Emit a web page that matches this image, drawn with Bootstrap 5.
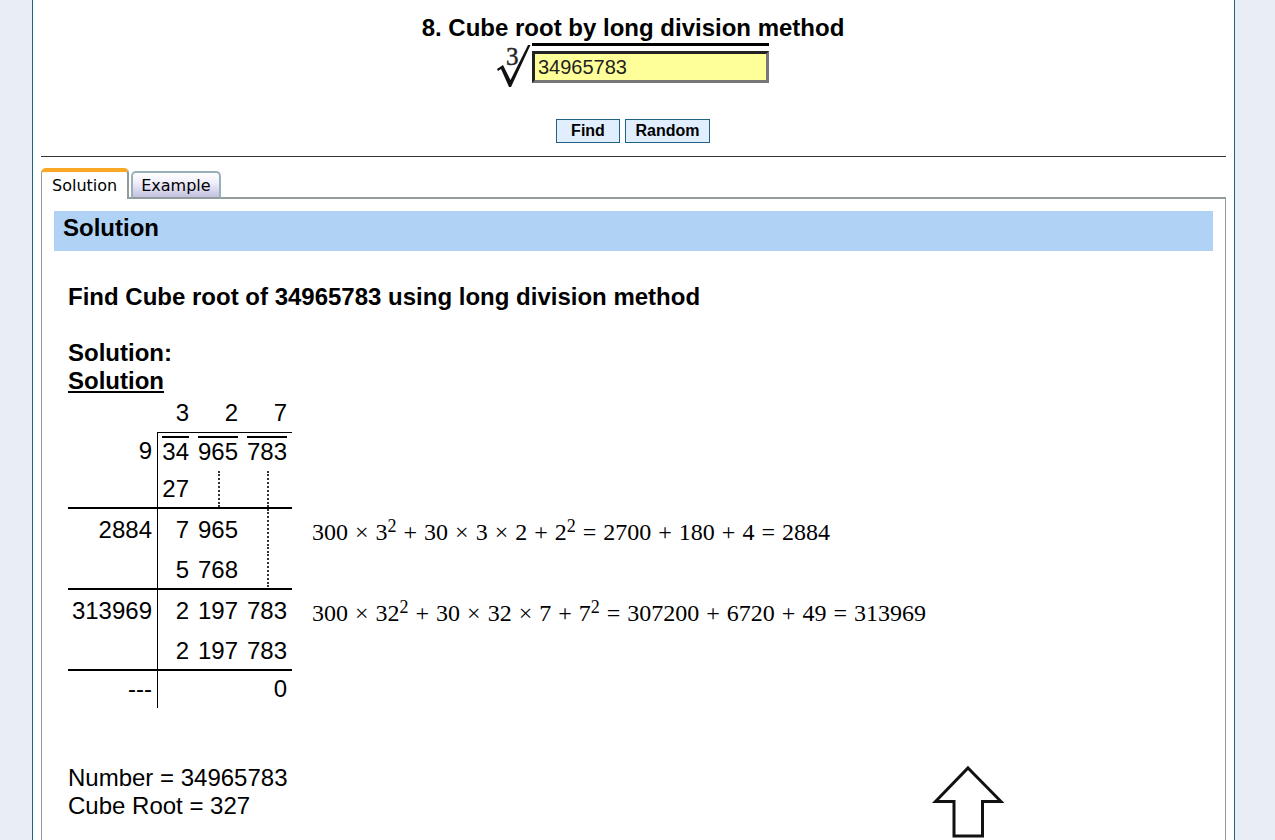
<!DOCTYPE html>
<html lang="en">
<head>
<meta charset="utf-8">
<meta name="viewport" content="width=device-width, initial-scale=1">
<title>Cube root by long division method</title>
<link href="https://cdn.jsdelivr.net/npm/bootstrap@5.3.0/dist/css/bootstrap.min.css" rel="stylesheet">
<style>
  body { background: #e8edf6; color: #000; font: 24px/28px "Liberation Sans", Arial, sans-serif; padding: 0 40px 0 32px; }
  .sheet { background: #fff; border: 1px solid #23647f; border-width: 0 1px; padding: 14px 8px 0; }
  .finder { padding-right: 1px; }
  .title { font-size: 24px; line-height: 28px; font-weight: 700; }
  .root-row { margin-top: 1px; }
  .button-row { gap: 5px; margin-top: 31px; }
  .radical { width: 35px; height: 45px; }
  .number-box { width: 237px; border-top: 3px solid #000; padding-top: 5px; }
  .number-box input { width: 100%; height: 32px; padding: 0 3px; border: 3px solid; border-color: #222 #767676 #767676 #222; background: #ff9; font-size: 20px; line-height: 24px; color: #222; border-radius: 0; }
  .tool-btn { height: 24px; padding: 0 9px; min-width: 64px; border: 1px solid #236181; border-radius: 0; background: #e0eefd; color: #000; font-weight: 700; font-size: 16px; line-height: 20px; }
  .tool-btn.wide { min-width: 85px; }
  .rule { height: 1px; background: #333; margin: 13px 0 11px; }
  .tab-row { border: 0; margin-bottom: -2px; gap: 2px; position: relative; }
  .tab-row .tab-btn { margin: 0; padding: 0 8px; font: 16px/26px "DejaVu Sans", Verdana, sans-serif; color: #000; border: 2px solid #9ab0b8; border-radius: 5px 5px 0 0; height: 28px; background: linear-gradient(#fff, #f0eefb 40%, #c3c2df); border-bottom: 2px solid #929c9c; }
  .tab-row .tab-btn.active { height: 31px; padding: 0 10px; color: #000; background: #fff; border: 1px solid #929c9c; border-right-width: 2px; border-top: 4px solid #f9a825; border-bottom: 0; }
  .panel { border: 1px solid #969696; border-top: 2px solid #929c9c; border-bottom: 0; padding: 12px 12px 0; }
  .band { background: #b0d3f5; height: 40px; padding: 3px 9px; font-size: 24px; line-height: 28px; font-weight: 700; }
  .answer { padding: 32px 14px 0; }
  .answer h3 { font-size: 24px; line-height: 28px; font-weight: 700; margin: 0; }
  .division { border-collapse: separate; border-spacing: 0; }
  .division td { padding: 2px 5px 0 0; text-align: right; vertical-align: middle; }
  .division tr { height: 40px; }
  .division .short { height: 37px; }
  .division .head { height: 39px; }
  .division .sum { height: 41px; }
  .division .first { height: 38px; }
  .division .divisor { width: 89px; }
  .division .g1 { width: 37px; border-left: 1px solid #000; }
  .division .open { border-left: 0; }
  .division .g2, .division .g3 { width: 49px; }
  .division .short td { padding-top: 0; padding-bottom: 2px; }
  .division .first td { padding-top: 0; }
  .division .head td { padding-top: 0; padding-bottom: 2px; }
  .division .head td:not(.divisor) { border-top: 1px solid #000; }
  .division .head span { border-top: 2px solid #000; display: inline-block; line-height: 28px; }
  .division .sum td:not(.work) { border-bottom: 2px solid #000; }
  .division td.drop { padding: 0; }
  .drop span { display: block; width: 2px; height: 36px; margin: 0 auto; border-left: 2px dotted #333; }
  .drop .full { height: 40px; }
  .division td.work { padding: 6px 0 0 20px; text-align: left; font-family: "Liberation Serif", "Times New Roman", serif; white-space: nowrap; line-height: 28px; }
  .work i, .work b { font-style: normal; font-weight: 400; margin: 0 7px; }
  .work sup { font-size: 18px; line-height: 0; top: -8px; vertical-align: baseline; }
  .to-top { right: 271px; bottom: 1px; width: 72px; height: 74px; line-height: 0; }
</style>
</head>
<body>
<main class="sheet min-vh-100 d-flex flex-column">
  <header class="finder text-center">
    <h1 class="title mb-0">8. Cube root by long division method</h1>
    <div class="root-row d-flex justify-content-center">
      <svg class="radical" viewBox="0 0 35 45" aria-hidden="true">
        <path d="M0 26L6 22L13.500 37L31 2H33.500L14 44H12L4 26L1 28Z" fill="#111"/>
        <text x="9" y="22" font-family="Liberation Serif, serif" font-size="25" stroke="#333" stroke-width=".5" fill="#222">3</text>
      </svg>
      <div class="number-box"><input class="d-block" type="text" value="34965783" aria-label="Number"></div>
    </div>
    <div class="button-row d-flex justify-content-center">
      <button type="button" class="tool-btn">Find</button>
      <button type="button" class="tool-btn wide">Random</button>
    </div>
  </header>
  <div class="rule"></div>
  <div class="nav nav-tabs tab-row align-items-end" role="tablist">
    <button type="button" class="nav-link tab-btn active" role="tab" aria-selected="true">Solution</button>
    <button type="button" class="nav-link tab-btn" role="tab" aria-selected="false">Example</button>
  </div>
  <section class="panel flex-grow-1">
    <h2 class="band mb-0">Solution</h2>
    <div class="answer">
      <h3>Find Cube root of 34965783 using long division method</h3>
      <h3 class="mt-4 pt-1">Solution:</h3>
      <h3 class="text-decoration-underline">Solution</h3>
      <table class="division">
        <tr class="short"><td class="divisor"></td><td class="g1 open">3</td><td class="g2">2</td><td class="g3">7</td></tr>
        <tr class="head"><td class="divisor">9</td><td class="g1"><span>34</span></td><td class="g2"><span>965</span></td><td class="g3"><span>783</span></td></tr>
        <tr class="sum first"><td></td><td class="g1">27</td><td class="drop"><span></span></td><td class="drop"><span></span></td></tr>
        <tr><td>2884</td><td class="g1">7</td><td>965</td><td class="drop"><span class="full"></span></td>
          <td class="work">300<i>×</i>3<sup>2</sup><i>+</i>30<i>×</i>3<i>×</i>2<i>+</i>2<sup>2</sup><b>=</b>2700<i>+</i>180<i>+</i>4<b>=</b>2884</td></tr>
        <tr class="sum"><td></td><td class="g1">5</td><td>768</td><td class="drop"><span></span></td></tr>
        <tr><td>313969</td><td class="g1">2</td><td>197</td><td>783</td>
          <td class="work">300<i>×</i>32<sup>2</sup><i>+</i>30<i>×</i>32<i>×</i>7<i>+</i>7<sup>2</sup><b>=</b>307200<i>+</i>6720<i>+</i>49<b>=</b>313969</td></tr>
        <tr class="sum"><td></td><td class="g1">2</td><td>197</td><td>783</td></tr>
        <tr class="short"><td>---</td><td class="g1"></td><td></td><td>0</td></tr>
      </table>
      <p class="mb-0 mt-5 pt-2">Number = 34965783<br>Cube Root = 327</p>
    </div>
  </section>
</main>
<a href="#" class="to-top position-fixed" aria-label="Back to top">
  <svg width="72" height="74" viewBox="0 0 72 74"><path d="M36 3L69 36.500H50.500V71H22V36.500H3.500Z" fill="#fff" stroke="#111" stroke-width="3"/></svg>
</a>
<script src="https://cdn.jsdelivr.net/npm/bootstrap@5.3.0/dist/js/bootstrap.bundle.min.js"></script>
</body>
</html>
